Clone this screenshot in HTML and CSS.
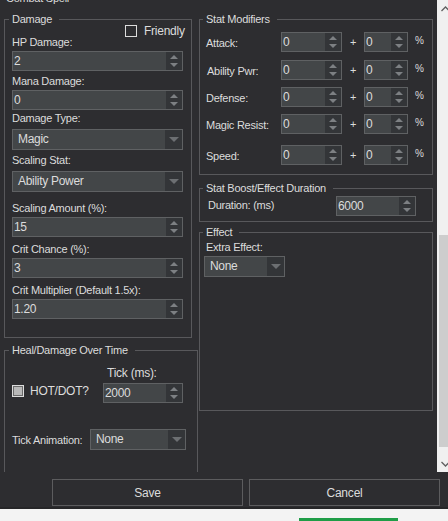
FILE: index.html
```html
<!DOCTYPE html>
<html>
<head>
<meta charset="utf-8">
<link rel="stylesheet" href="styles.css">
</head>
<body>
<div class="window">
  <div class="main">
    <div class="content">
      <div class="outer-title">Combat Spell</div>
      <div class="columns">
        <div class="col">
          <fieldset class="group damage">
            <legend>Damage</legend>
            <div class="friendly"><span class="check"></span><span class="check-label">Friendly</span></div>
            <div class="field mt-n1">
              <div class="lbl">HP Damage:</div>
              <div class="spin"><span class="val">2</span><span class="arrows"><span class="up"></span><span class="down"></span></span></div>
            </div>
            <div class="field mt4">
              <div class="lbl">Mana Damage:</div>
              <div class="spin"><span class="val">0</span><span class="arrows"><span class="up"></span><span class="down"></span></span></div>
            </div>
            <div class="field mt2">
              <div class="lbl lbl-combo">Damage Type:</div>
              <div class="combo"><span class="val">Magic</span><span class="drop"></span></div>
            </div>
            <div class="field mt4">
              <div class="lbl lbl-combo">Scaling Stat:</div>
              <div class="combo"><span class="val">Ability Power</span><span class="drop"></span></div>
            </div>
            <div class="field mt10">
              <div class="lbl">Scaling Amount (%):</div>
              <div class="spin"><span class="val">15</span><span class="arrows"><span class="up"></span><span class="down"></span></span></div>
            </div>
            <div class="field mt6">
              <div class="lbl">Crit Chance (%):</div>
              <div class="spin"><span class="val">3</span><span class="arrows"><span class="up"></span><span class="down"></span></span></div>
            </div>
            <div class="field mt6">
              <div class="lbl">Crit Multiplier (Default 1.5x):</div>
              <div class="spin"><span class="val">1.20</span><span class="arrows"><span class="up"></span><span class="down"></span></span></div>
            </div>
          </fieldset>

          <fieldset class="group heal">
            <legend>Heal/Damage Over Time</legend>
            <div class="tick-label">Tick (ms):</div>
            <div class="hot-row">
              <div class="hot-left"><span class="check checked"></span><span class="hot-label">HOT/DOT?</span></div>
              <div class="spin tick"><span class="val">2000</span><span class="arrows"><span class="up"></span><span class="down"></span></span></div>
            </div>
            <div class="anim-row">
              <div class="anim-label">Tick Animation:</div>
              <div class="combo anim"><span class="val">None</span><span class="drop"></span></div>
            </div>
          </fieldset>
        </div>

        <div class="col">
          <fieldset class="group wide stats">
            <legend>Stat Modifiers</legend>
            <div class="stat-row first">
              <span class="stat-lbl">Attack:</span>
              <div class="spin"><span class="val">0</span><span class="arrows"><span class="up"></span><span class="down"></span></span></div>
              <span class="plus">+</span>
              <div class="spin"><span class="val">0</span><span class="arrows"><span class="up"></span><span class="down"></span></span></div>
              <span class="pct">%</span>
            </div>
            <div class="stat-row r2">
              <span class="stat-lbl indent">Ability Pwr:</span>
              <div class="spin"><span class="val">0</span><span class="arrows"><span class="up"></span><span class="down"></span></span></div>
              <span class="plus">+</span>
              <div class="spin"><span class="val">0</span><span class="arrows"><span class="up"></span><span class="down"></span></span></div>
              <span class="pct">%</span>
            </div>
            <div class="stat-row r3">
              <span class="stat-lbl">Defense:</span>
              <div class="spin"><span class="val">0</span><span class="arrows"><span class="up"></span><span class="down"></span></span></div>
              <span class="plus">+</span>
              <div class="spin"><span class="val">0</span><span class="arrows"><span class="up"></span><span class="down"></span></span></div>
              <span class="pct">%</span>
            </div>
            <div class="stat-row r3">
              <span class="stat-lbl">Magic Resist:</span>
              <div class="spin"><span class="val">0</span><span class="arrows"><span class="up"></span><span class="down"></span></span></div>
              <span class="plus">+</span>
              <div class="spin"><span class="val">0</span><span class="arrows"><span class="up"></span><span class="down"></span></span></div>
              <span class="pct">%</span>
            </div>
            <div class="stat-row r5">
              <span class="stat-lbl">Speed:</span>
              <div class="spin"><span class="val">0</span><span class="arrows"><span class="up"></span><span class="down"></span></span></div>
              <span class="plus">+</span>
              <div class="spin"><span class="val">0</span><span class="arrows"><span class="up"></span><span class="down"></span></span></div>
              <span class="pct">%</span>
            </div>
          </fieldset>

          <fieldset class="group wide boost">
            <legend>Stat Boost/Effect Duration</legend>
            <div class="dur-row">
              <span class="dur-lbl">Duration: (ms)</span>
              <div class="spin"><span class="val">6000</span><span class="arrows"><span class="up"></span><span class="down"></span></span></div>
            </div>
          </fieldset>

          <fieldset class="group wide effect">
            <legend>Effect</legend>
            <div class="lbl extra-lbl">Extra Effect:</div>
            <div class="combo extra"><span class="val">None</span><span class="drop"></span></div>
          </fieldset>
        </div>
      </div>
    </div>

    <div class="scrollbar">
      <div class="sb-btn">
        <svg width="17" height="17" viewBox="0 0 17 17"><path d="M4.5 11 L8.5 7 L12.5 11" fill="none" stroke="#606060" stroke-width="1.3"/></svg>
      </div>
      <div class="sb-track"><div class="sb-thumb"></div></div>
      <div class="sb-btn">
        <svg width="17" height="17" viewBox="0 0 17 17"><path d="M4.5 7 L8.5 11 L12.5 7" fill="none" stroke="#606060" stroke-width="1.3"/></svg>
      </div>
    </div>
  </div>

  <div class="footer">
    <div class="btn">Save</div>
    <div class="btn">Cancel</div>
  </div>
  <div class="strip"><span class="strip-sep"></span><span class="strip-green"></span></div>
</div>
</body>
</html>
```

FILE: styles.css
```css
html, body {
  margin: 0;
  padding: 0;
}
body {
  background: #2d2d30;
  color: #dcdcdc;
  font-family: "Liberation Sans", Arial, sans-serif;
  font-size: 11px;
  letter-spacing: -0.25px;
  overflow: hidden;
  width: 448px;
  height: 521px;
}
.window {
  display: flex;
  flex-direction: column;
  width: 448px;
  height: 521px;
}
.main {
  display: flex;
  height: 472px;
  overflow: hidden;
}
.content {
  width: 437px;
  flex: none;
}
.outer-title {
  height: 13px;
  line-height: 13px;
  margin-top: -8px;
  padding-left: 6px;
}
.columns {
  display: grid;
  grid-template-columns: 194px 234px;
  column-gap: 1px;
  padding-left: 4px;
  margin-top: 8px;
}
.col {
  display: flex;
  flex-direction: column;
  align-items: flex-start;
}

/* group boxes */
.group {
  margin: 0;
  border: 1px solid #58585b;
  min-width: 0;
  box-sizing: border-box;
  padding: 0 8px 0 7px;
}
.group legend {
  padding: 0 7px 0 3px;
  margin-left: -3px;
  height: 13px;
  line-height: 13px;
}
.damage {
  width: 188px;
  padding-bottom: 18px;
}
.heal {
  width: 194px;
  margin-top: 6px;
  padding-bottom: 60px;
}
.wide {
  width: 234px;
  padding: 0 6px;
}
.stats { padding-bottom: 9px; }
.boost { margin-top: 7px; padding-bottom: 5px; }
.effect { margin-top: 4px; padding-bottom: 133px; }

/* fields */
.lbl {
  height: 13px;
  line-height: 13px;
  margin-bottom: 2px;
  white-space: nowrap;
}
.lbl-combo { margin-bottom: 4px; }
.mt-n1 { margin-top: -1px; }
.mt2 { margin-top: 2px; }
.mt4 { margin-top: 4px; }
.mt6 { margin-top: 6px; }
.mt10 { margin-top: 10px; }

.friendly {
  display: flex;
  align-items: center;
  height: 12px;
  margin-top: -1px;
  margin-left: 113px;
}
.check {
  width: 12px;
  height: 12px;
  box-sizing: border-box;
  border: 1px solid #dcdcdc;
  flex: none;
}
.check.checked {
  background: #b8b8b8;
  box-shadow: inset 0 0 0 1px #6a6a6a;
}
.check-label {
  margin-left: 7px;
  font-size: 12px;
  line-height: 12px;
}

/* spin box */
.spin {
  display: flex;
  height: 20px;
  box-sizing: border-box;
  border: 1px solid #5f6163;
  background: #434648;
}
.spin .val {
  flex: 1;
  padding-left: 1px;
  line-height: 18px;
  font-size: 12px;
  letter-spacing: -0.3px;
  overflow: hidden;
}
.spin .arrows {
  width: 16px;
  flex: none;
  background: #333538;
  display: flex;
  flex-direction: column;
  align-items: center;
  justify-content: center;
  gap: 4px;
}
.spin .up {
  width: 0;
  height: 0;
  border-left: 4px solid transparent;
  border-right: 4px solid transparent;
  border-bottom: 4px solid #7d8083;
}
.spin .down {
  width: 0;
  height: 0;
  border-left: 4px solid transparent;
  border-right: 4px solid transparent;
  border-top: 4px solid #7d8083;
}

/* combo box */
.combo {
  display: flex;
  height: 21px;
  box-sizing: border-box;
  border: 1px solid #5f6163;
  background: #434648;
}
.combo .val {
  flex: 1;
  padding-left: 5px;
  line-height: 19px;
  font-size: 12px;
  letter-spacing: -0.3px;
  white-space: nowrap;
  overflow: hidden;
}
.combo .drop {
  width: 17px;
  flex: none;
  background: #333538;
  display: flex;
  align-items: center;
  justify-content: center;
}
.combo .drop::after {
  content: "";
  width: 0;
  height: 0;
  border-left: 5px solid transparent;
  border-right: 5px solid transparent;
  border-top: 5px solid #6c6f72;
}

/* heal group */
.tick-label {
  height: 13px;
  line-height: 13px;
  margin-top: 10px;
  padding-left: 95px;
  font-size: 12px;
}
.hot-row {
  display: flex;
  align-items: center;
  margin-top: 3px;
}
.hot-left {
  width: 91px;
  display: flex;
  align-items: center;
  margin-bottom: 4px;
}
.hot-label {
  margin-left: 6px;
  font-size: 12px;
}
.tick { width: 80px; }
.anim-row {
  display: flex;
  align-items: center;
  margin-top: 26px;
}
.anim-label {
  width: 78px;
  white-space: nowrap;
}
.anim { width: 96px; }

/* stat modifiers */
.stat-row {
  display: grid;
  grid-template-columns: 75px 61px 22px 44px auto;
  align-items: center;
  height: 20px;
}
.stat-row.first { margin-top: 6px; }
.stat-row.r2 { margin-top: 8px; }
.stat-row.r3 { margin-top: 7px; }
.stat-row.r5 { margin-top: 11px; }
.stat-lbl {
  white-space: nowrap;
  padding-top: 2px;
}
.stat-lbl.indent { padding-left: 1px; }
.plus { text-align: center; }
.pct {
  padding-left: 7px;
  font-size: 10px;
  padding-bottom: 3px;
}

.dur-row {
  display: grid;
  grid-template-columns: 130px 80px;
  align-items: center;
  margin-top: 1px;
}
.dur-lbl {
  padding-left: 2px;
  padding-bottom: 3px;
}

.extra-lbl { margin-top: 2px; }
.extra {
  width: 81px;
  margin-left: -2px;
}

/* scrollbar */
.scrollbar {
  width: 11px;
  flex: none;
  overflow: hidden;
  background: #f0f0f0;
  display: flex;
  flex-direction: column;
}
.sb-btn {
  height: 17px;
  flex: none;
}
.sb-btn svg { display: block; }
.sb-track {
  flex: 1;
  padding: 218px 0 0 2px;
}
.sb-thumb {
  width: 13px;
  height: 212px;
  background: #cdcdcd;
}

/* footer */
.footer {
  height: 37px;
  box-sizing: border-box;
  padding: 7px 8px 0 0;
  display: flex;
  justify-content: flex-end;
  gap: 6px;
  border-bottom: 2px solid #262628;
}
.btn {
  width: 191px;
  height: 27px;
  box-sizing: border-box;
  border: 1px solid #5c5c5e;
  display: flex;
  align-items: center;
  justify-content: center;
  font-size: 12px;
  letter-spacing: -0.2px;
}
.strip {
  flex: 1;
  background: #f3f3f3;
  display: flex;
  align-items: flex-end;
  position: relative;
}
.strip-green {
  width: 99px;
  height: 3px;
  background: #1f9d47;
  margin-left: 299px;
}
.strip-sep {
  display: none;
}
```
